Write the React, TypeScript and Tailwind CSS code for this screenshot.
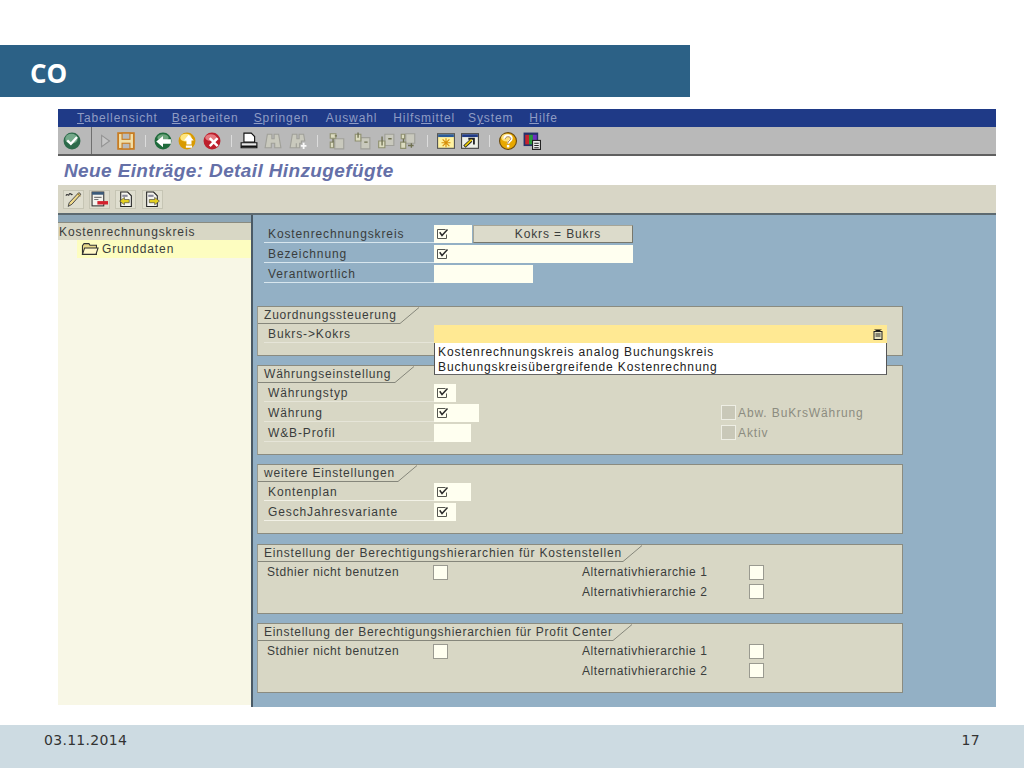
import React from "react";

const Chk = () => (
  <svg width="12" height="12" viewBox="0 0 12 12" className="block">
    <path d="M0.5 1.5H8.5M0.5 1.5V10.5H9.5V6.5" fill="none" stroke="#55564f" strokeWidth="1" />
    <path d="M2.7 4.3L5 7.5L10.5 1.5" fill="none" stroke="#2b2b2b" strokeWidth="1.5" />
  </svg>
);

const Icon = ({ children, cls }: { children: React.ReactNode; cls: string }) => (
  <svg width="18" height="18" viewBox="0 0 16 16" className={"block shrink-0 " + cls}>{children}</svg>
);

const Sep = ({ cls }: { cls: string }) => <div className={"w-px h-[12px] bg-[#dcdcdc] shrink-0 " + cls} />;

const G = ({ d }: { d: string }) => <path d={d} fill="#c9c9bd" stroke="#a0a099" strokeWidth="1" />;

const Toolbar = () => (
  <div className="h-[29px] bg-[#b9b9b9] border-b-2 border-[#5f5f5f] flex items-center shrink-0">
    <Icon cls="ml-[5px]">
      <circle cx="8" cy="8" r="7.5" fill="#2c6a4a" />
      <ellipse cx="7.5" cy="6" rx="5.5" ry="4.5" fill="#74a98a" />
      <path d="M3.8 7.5L7 10.5L12.5 4.5" fill="none" stroke="#fff" strokeWidth="2" />
    </Icon>
    <div className="w-px h-[27px] bg-[#6f6f6f] ml-[10px] shrink-0" />
    <Icon cls="ml-[4px]"><path d="M5 3L12 8L5 13Z" fill="#c6c6c6" stroke="#949494" /></Icon>
    <Icon cls="ml-[3px]">
      <rect x="1" y="1" width="14" height="14" fill="#f1dfa8" stroke="#c87c22" strokeWidth="1.6" />
      <rect x="4.5" y="1" width="7" height="5.5" fill="#b9b9b9" stroke="#c87c22" />
      <rect x="4.5" y="10" width="7" height="5" fill="#b9b9b9" stroke="#c87c22" />
    </Icon>
    <Sep cls="ml-[10px]" />
    <Icon cls="ml-[8px]">
      <circle cx="8" cy="8" r="7.5" fill="#1f6b3c" />
      <ellipse cx="8" cy="5" rx="5" ry="3" fill="#6da57c" />
      <path d="M2 8.5L8 3.5V6.5H15V10.5H8V13.5Z" fill="#fff" />
    </Icon>
    <Icon cls="ml-[6px]">
      <circle cx="8" cy="8" r="7.5" fill="#d99a00" />
      <ellipse cx="7" cy="5" rx="5" ry="3.5" fill="#ffe680" />
      <path d="M9.5 2.5L14 7.5H12V11H7.5V7.5H5.2Z" fill="#fff" />
      <rect x="7" y="12" width="5.5" height="2" fill="#fff" />
    </Icon>
    <Icon cls="ml-[7px]">
      <circle cx="8" cy="8" r="7.5" fill="#bd1f2c" />
      <ellipse cx="7" cy="5" rx="5" ry="3" fill="#e57a80" />
      <path d="M6 5.5L13 12.5M13 5.5L6 12.5" stroke="#fff" strokeWidth="2.2" />
    </Icon>
    <Sep cls="ml-[10px]" />
    <Icon cls="ml-[8px]">
      <path d="M3.5 1H10L13 4V9H3.5Z" fill="#fff" stroke="#111" />
      <path d="M1 9.5H15V14H1Z" fill="#e8e8e8" stroke="#111" />
      <path d="M1 12.8H15" stroke="#111" strokeWidth="1.6" />
    </Icon>
    <Icon cls="ml-[6px]">
      <G d="M3 2H7V6H9V2H13L15 14H9.5V10H6.5V14H1Z" />
    </Icon>
    <Icon cls="ml-[7px]">
      <G d="M3 2H7V6H9V2H13L14 8H11V10H9.5V14H1ZM6.5 10V14" />
      <path d="M13 9.5V15M10.5 12.3H15.5" stroke="#fafafa" strokeWidth="1.6" />
    </Icon>
    <Sep cls="ml-[10px]" />
    <Icon cls="ml-[10px]">
      <G d="M6 6H14V15H6Z" />
      <path d="M2 1.5H7V5.5H2ZM2 9H5V14H2Z" fill="#dcdcc0" stroke="#8f9070" />
      <path d="M4.5 6V9M8 3.5H6" stroke="#6f7050" strokeWidth="1.2" />
    </Icon>
    <Icon cls="ml-[7px]">
      <G d="M7 5H15V15H7Z" />
      <path d="M2 2H7V8H2Z" fill="#dcdcc0" stroke="#8f9070" />
      <path d="M4.5 0.5V5M10 9H13" stroke="#6f7050" strokeWidth="1.2" />
    </Icon>
    <Icon cls="ml-[6px]">
      <G d="M7 2H15V12H7Z" />
      <path d="M1.5 8H7V14H1.5Z" fill="#dcdcc0" stroke="#8f9070" />
      <path d="M4.5 4V12M10 6H13" stroke="#6f7050" strokeWidth="1.2" />
    </Icon>
    <Icon cls="ml-[4px]">
      <G d="M6 1.5H14V10H6Z" />
      <path d="M1.5 9H6V14.5H1.5ZM2 2H5V6H2Z" fill="#dcdcc0" stroke="#8f9070" />
      <path d="M4 6V9M8 12H13M11 10V14" stroke="#6f7050" strokeWidth="1.2" />
    </Icon>
    <Sep cls="ml-[10px]" />
    <Icon cls="ml-[9px]">
      <rect x="0.5" y="1.5" width="15" height="13" fill="#fff2a0" stroke="#555" />
      <rect x="1" y="2" width="14" height="2.5" fill="#2a5a9a" />
      <path d="M8 5.5V13.5M4 9.5H12M5 6.5L11 12.5M11 6.5L5 12.5" stroke="#d8900a" strokeWidth="1" />
    </Icon>
    <Icon cls="ml-[6px]">
      <rect x="0.5" y="1.5" width="15" height="13" fill="#eef0e6" stroke="#444" />
      <rect x="1" y="2" width="14" height="2.5" fill="#1f3a87" />
      <path d="M3 13L9 7.5" stroke="#222" strokeWidth="3" />
      <path d="M6.5 6H11.5V11" fill="none" stroke="#222" strokeWidth="1.6" />
      <path d="M3.5 12.5L9.5 6.8" stroke="#f0d000" strokeWidth="1.4" />
    </Icon>
    <Sep cls="ml-[10px]" />
    <Icon cls="ml-[9px]">
      <circle cx="8" cy="8" r="7.5" fill="#e8a800" stroke="#6a4a10" />
      <ellipse cx="7" cy="5" rx="5" ry="3.5" fill="#ffe27a" />
      <path d="M5 6C5 2.5 11 2.5 11 6C11 8 8 8 8 10.5" fill="none" stroke="#fff" strokeWidth="2.2" />
      <path d="M5.6 6.4C5.6 3.6 10.4 3.4 10.4 6C10.4 7.6 7.6 7.8 7.6 10.4" fill="none" stroke="#7a4a10" strokeWidth="0.6" />
      <rect x="7" y="11.5" width="2.2" height="2.2" fill="#fff" />
    </Icon>
    <Icon cls="ml-[6px]">
      <rect x="0.5" y="0.5" width="13" height="12" fill="#27306a" />
      <rect x="2" y="2.5" width="3.4" height="8.5" fill="#c8232c" />
      <rect x="5.4" y="2.5" width="3.4" height="8.5" fill="#2a9a3a" />
      <rect x="8.8" y="2.5" width="3.4" height="8.5" fill="#7030c0" />
      <rect x="8.5" y="7.5" width="7" height="8" fill="#eee" stroke="#222" />
      <path d="M10 10H14M10 12H14M10 14H14" stroke="#222" />
    </Icon>
  </div>
);

const AppBtn = ({ children, cls }: { children: React.ReactNode; cls: string }) => (
  <div className={"w-[21px] h-[19px] bg-[#dfdecf] border border-[#c6c5b4] flex items-center justify-center shrink-0 " + cls}>
    {children}
  </div>
);

const Label = ({ text, w = "w-[170px]", line = "border-[#d8e6ee]" }: { text: string; w?: string; line?: string }) => (
  <div className={"h-full pl-[4px] border-b flex items-center shrink-0 whitespace-nowrap " + w + " " + line}>{text}</div>
);

const Input = ({ w, checked }: { w: string; checked?: boolean }) => (
  <div className={"h-full bg-[#fffff0] pl-[3px] flex items-center shrink-0 " + w}>{checked && <Chk />}</div>
);

const Row = ({ text, w, checked, line, mb = "mb-[2px]" }: { text: string; w: string; checked?: boolean; line?: string; mb?: string }) => (
  <div className={"flex h-[18px] ml-[6px] " + mb}>
    <Label text={text} line={line} />
    <Input w={w} checked={checked} />
  </div>
);

const Panel = ({ title, tab, h, mb, children }: { title: string; tab: string; h: string; mb: string; children: React.ReactNode }) => (
  <div className={"w-[646px] bg-[#d8d7c5] border border-[#8a8b80] border-l-[#9a9b90] " + h + " " + mb}>
    <div className="flex h-[17px] mb-px">
      <div className={"h-full pl-[6px] border-b border-[#85867b] flex items-center shrink-0 whitespace-nowrap " + tab}>{title}</div>
      <svg width="20" height="17" viewBox="0 0 20 17" className="block shrink-0">
        <path d="M0 16.5L19 0.5" stroke="#85867b" fill="none" />
      </svg>
    </div>
    {children}
  </div>
);

const Box = ({ disabled, cls }: { disabled?: boolean; cls?: string }) => (
  <div
    className={
      "w-[15px] h-[15px] border shrink-0 " +
      (disabled ? "bg-[#c9c8b8] border-[#eeeee4] " : "bg-[#fffff0] border-[#9a9a90] ") +
      (cls || "")
    }
  />
);

const AuthRows = () => (
  <div className="tracking-[0.58px] -mt-px">
    <div className="flex items-center h-[20px] ml-[9px]">
      <div className="w-[166px] shrink-0 -mt-px">Stdhier nicht benutzen</div>
      <Box />
      <div className="ml-[134px] w-[167px] shrink-0">Alternativhierarchie 1</div>
      <Box />
    </div>
    <div className="flex items-center h-[19px] ml-[324px]">
      <div className="w-[167px] shrink-0">Alternativhierarchie 2</div>
      <Box />
    </div>
  </div>
);

const Menu = ({ u, a, b, cls }: { u: string; a?: string; b?: string; cls: string }) => (
  <span className={cls}>
    {a}
    <span className="underline">{u}</span>
    {b}
  </span>
);

export default function App() {
  return (
    <div className="w-[1024px] h-[768px] bg-white overflow-hidden pt-[45px] flex flex-col font-['Liberation_Sans',Arial,sans-serif]">
      <div className="w-[690px] h-[52px] bg-[#2c6186] flex items-center pl-[30px] shrink-0">
        <span className="text-white font-bold text-[26px] leading-none font-['Open_Sans',sans-serif] mt-[3px]">CO</span>
      </div>

      <div className="w-[938px] h-[598px] ml-[58px] mt-[12px] flex flex-col shrink-0 text-[12px] tracking-[0.88px] text-[#3a3d3c] leading-none">
        <div className="h-[18px] bg-[#1f3a87] flex items-center text-[#8f9cc4] shrink-0">
          <Menu cls="ml-[19px]" u="T" b="abellensicht" />
          <Menu cls="ml-[14px]" u="B" b="earbeiten" />
          <Menu cls="ml-[15px]" u="S" b="pringen" />
          <Menu cls="ml-[17px]" a="Aus" u="w" b="ahl" />
          <Menu cls="ml-[16px]" a="Hilfs" u="m" b="ittel" />
          <Menu cls="ml-[13px]" a="S" u="y" b="stem" />
          <Menu cls="ml-[16px]" u="H" b="ilfe" />
        </div>
        <Toolbar />
        <div className="h-[29px] bg-white flex items-center pl-[6px] shrink-0">
          <span className="font-bold italic text-[19px] tracking-[0.38px] text-[#6570a8]">Neue Einträge: Detail Hinzugefügte</span>
        </div>
        <div className="h-[28px] bg-[#d8d6c6] flex items-center pl-[5px] shrink-0">
          <AppBtn cls="">
            <svg width="18" height="17" viewBox="0 0 16 16">
              <path d="M14.5 3L6 12.5L2.5 14.5L3.5 11L12.5 1.5Z" fill="#efd98a" stroke="#444" strokeWidth="0.9" />
              <path d="M11.5 2.5L14 5" stroke="#9a7a30" />
              <path d="M0.5 4.5C1.5 1.5 2.5 5.5 3.5 3C4.5 1 5.5 4.5 6.5 3" fill="none" stroke="#333" strokeWidth="1.1" />
            </svg>
          </AppBtn>
          <AppBtn cls="ml-[5px]">
            <svg width="17" height="17" viewBox="0 0 16 16">
              <rect x="1" y="1" width="11" height="13" fill="#f4f4ee" stroke="#333" />
              <rect x="1" y="1" width="11" height="2.5" fill="#3a5a7a" />
              <path d="M3 6H10M3 8H7" stroke="#777" />
              <rect x="6" y="9.5" width="10" height="3.2" fill="#d3212d" />
            </svg>
          </AppBtn>
          <AppBtn cls="ml-[5px]">
            <svg width="17" height="17" viewBox="0 0 16 16">
              <path d="M3.5 1H10L13.5 4.5V14.5H3.5Z" fill="#f6f6f0" stroke="#222" />
              <path d="M5 3.5H10V5.5H5Z" fill="#889" />
              <path d="M2.5 9.5L7 6V8H11.5V11H7V13Z" fill="#e4d020" stroke="#444" strokeWidth="0.6" />
            </svg>
          </AppBtn>
          <AppBtn cls="ml-[6px]">
            <svg width="17" height="17" viewBox="0 0 16 16">
              <path d="M2.5 1H9L12.5 4.5V14.5H2.5Z" fill="#f6f6f0" stroke="#222" />
              <path d="M4 3.5H9V5.5H4Z" fill="#889" />
              <path d="M14.5 9.5L10 6V8H5V11H10V13Z" fill="#e4d020" stroke="#444" strokeWidth="0.6" />
            </svg>
          </AppBtn>
        </div>

        <div className="flex-1 flex min-h-0 border-t-2 border-[#5d6a70] bg-[#93b0c5]">
          <div className="w-[193px] flex flex-col shrink-0 bg-white">
            <div className="h-[7px] bg-[#8da6b6] shrink-0" />
            <div className="h-[18px] bg-[#d8d7c5] border-t border-[#8a8b80] pl-px flex items-center shrink-0">Kostenrechnungskreis</div>
            <div className="flex-1 bg-[#f8f7e6] mb-[2px]">
              <div className="h-[18px] ml-[19px] bg-[#fdfdc0] flex items-center pl-[4px]">
                <svg width="18" height="14" viewBox="0 0 16 13" className="block shrink-0">
                  <path d="M1 11.5V3.5L2.5 1.5H7L8 3H14V11.5Z" fill="#e8d98a" stroke="#333" />
                  <path d="M1 11.5L3 5.5H15.5L13.5 11.5Z" fill="#fff8c8" stroke="#333" />
                </svg>
                <span className="ml-[3px]">Grunddaten</span>
              </div>
            </div>
          </div>
          <div className="w-[2px] bg-[#4a5a66] shrink-0" />
          <div className="flex-1 pl-[4px] pt-[10px]">
            <div className="h-[81px]">
              <div className="flex h-[18px] ml-[7px] mb-[2px]">
                <Label text="Kostenrechnungskreis" />
                <Input w="w-[38px]" checked />
                <div className="w-[160px] ml-px h-full bg-[#dcdbcb] border border-[#a5a598] border-b-[#77776c] border-r-[#77776c] flex items-center justify-center pl-[10px]">Kokrs = Bukrs</div>
              </div>
              <div className="flex h-[18px] ml-[7px] mb-[2px]">
                <Label text="Bezeichnung" />
                <Input w="w-[199px]" checked />
              </div>
              <div className="flex h-[18px] ml-[7px]">
                <Label text="Verantwortlich" />
                <Input w="w-[99px]" />
              </div>
            </div>

            <Panel title="Zuordnungssteuerung" tab="w-[142px] tracking-[0.8px]" h="h-[50px]" mb="mb-[9px]">
              <div className="flex h-[18px] ml-[6px] relative">
                <Label text="Bukrs->Kokrs" line="border-[#e6e5d8]" />
                <div className="w-[453px] h-full bg-[#ffe993] flex items-center justify-end pr-[4px] relative">
                  <svg width="10" height="11" viewBox="0 0 10 11" className="block">
                    <path d="M1 0.5H9L5 3Z" fill="#111" />
                    <rect x="1" y="2.5" width="8" height="8" fill="#e8e4c0" stroke="#222" />
                    <path d="M2.5 5H7.5M2.5 7H7.5" stroke="#222" />
                  </svg>
                  <div className="absolute left-0 top-[18px] w-[453px] h-[32px] z-10 bg-white border-l border-r border-b border-[#555] border-b-[#666] pl-[3px] pt-px text-[#222]">
                    <div className="h-[15px] flex items-center">Kostenrechnungskreis analog Buchungskreis</div>
                    <div className="h-[15px] flex items-center">Buchungskreisübergreifende Kostenrechnung</div>
                  </div>
                </div>
              </div>
            </Panel>

            <Panel title="Währungseinstellung" tab="w-[137px] tracking-[0.8px]" h="h-[90px]" mb="mb-[9px]">
              <div className="relative">
                <Row text="Währungstyp" w="w-[22px]" checked line="border-[#e6e5d8]" />
                <Row text="Währung" w="w-[45px]" checked line="border-[#e6e5d8]" />
                <Row text="W&B-Profil" w="w-[37px]" line="border-[#e6e5d8]" mb="" />
                <div className="absolute left-[463px] top-[21px] flex flex-col gap-[5px] text-[#8c8c80]">
                  <div className="flex items-center gap-[2px]"><Box disabled />Abw. BuKrsWährung</div>
                  <div className="flex items-center gap-[2px]"><Box disabled />Aktiv</div>
                </div>
              </div>
            </Panel>

            <Panel title="weitere Einstellungen" tab="w-[140px] tracking-[0.8px]" h="h-[70px]" mb="mb-[10px]">
              <Row text="Kontenplan" w="w-[37px]" checked line="border-[#f2f1e6]" />
              <Row text="GeschJahresvariante" w="w-[22px]" checked line="border-[#f2f1e6]" />
            </Panel>

            <Panel title="Einstellung der Berechtigungshierarchien für Kostenstellen" tab="w-[365px] tracking-[0.8px]" h="h-[70px]" mb="mb-[9px]">
              <AuthRows />
            </Panel>

            <Panel title="Einstellung der Berechtigungshierarchien für Profit Center" tab="w-[355px] tracking-[0.72px]" h="h-[70px]" mb="">
              <AuthRows />
            </Panel>
          </div>
        </div>
      </div>

      <div className="mt-[18px] flex-1 bg-[#cddbe2] flex items-center justify-between pl-[44px] pr-[44px] pb-[12px] text-[14px] tracking-[0.3px] text-[#333] font-['DejaVu_Sans',sans-serif]">
        <span>03.11.2014</span>
        <span>17</span>
      </div>
    </div>
  );
}
